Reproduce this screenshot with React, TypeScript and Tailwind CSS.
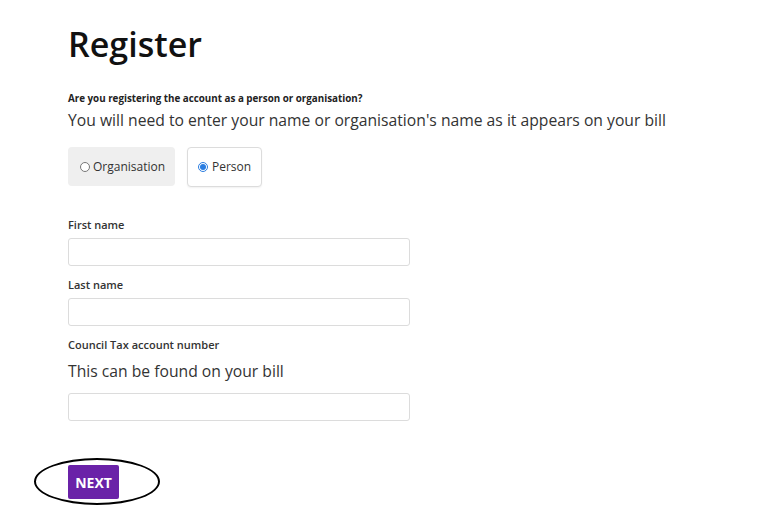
import React from "react";

const font = { fontFamily: '"Open Sans", "Noto Sans", sans-serif' };

function Field({ label, help }: { label: string; help?: string }) {
  return (
    <div className="flex flex-col">
      <label className="text-[11px] leading-[14px] font-semibold text-[#333]">{label}</label>
      {help && <p className="mt-[7px] text-[15.7px] leading-[24px] text-[#333]">{help}</p>}
      <input
        type="text"
        className={`${help ? "mt-[10px]" : "mt-[6px]"} h-[28px] w-[342px] rounded-[3px] border border-[#dcdcdc] bg-white px-2 outline-none`}
      />
    </div>
  );
}

export default function App() {
  return (
    <div className="min-h-[519px] w-[782px] bg-white pl-[68px] pt-[24px]" style={font}>
      <h1 className="text-[34px] leading-[40px] font-semibold text-[#111]">Register</h1>
      <p className="mt-[28px] text-[9.8px] leading-[14px] font-bold text-[#222]">
        Are you registering the account as a person or organisation?
      </p>
      <p className="mt-[2px] text-[15.7px] leading-[24px] text-[#333]">
        You will need to enter your name or organisation's name as it appears on your bill
      </p>
      <div className="mt-[15px] flex gap-[12px]">
        <div className="flex h-[39px] w-[107px] items-center gap-[3px] rounded-[4px] bg-[#efefef] pl-[12px]">
          <span className="h-[10px] w-[10px] rounded-full border border-[#777] bg-white" />
          <span className="text-[12px] text-[#333]">Organisation</span>
        </div>
        <div className="flex h-[40px] w-[75px] items-center gap-[4px] rounded-[4px] border border-[#dcdcdc] bg-white pl-[10px] shadow-[0_1px_2px_rgba(0,0,0,0.06)]">
          <span className="flex h-[10px] w-[10px] items-center justify-center rounded-full border border-[#2a7de1] bg-white">
            <span className="h-[6px] w-[6px] rounded-full bg-[#2a7de1]" />
          </span>
          <span className="text-[12px] text-[#333]">Person</span>
        </div>
      </div>
      <div className="mt-[31px] flex flex-col gap-[12px]">
        <Field label="First name" />
        <Field label="Last name" />
        <Field label="Council Tax account number" help="This can be found on your bill" />
      </div>
      <div className="relative mt-[44px] inline-block">
        <button className="flex h-[34px] w-[51px] items-center justify-center rounded-[2px] bg-[#6a22a8] text-[14px] font-bold text-white">
          NEXT
        </button>
        <div className="absolute left-[-34px] top-[-7px] h-[47px] w-[126px] rounded-[50%] border-2 border-black" />
      </div>
    </div>
  );
}
